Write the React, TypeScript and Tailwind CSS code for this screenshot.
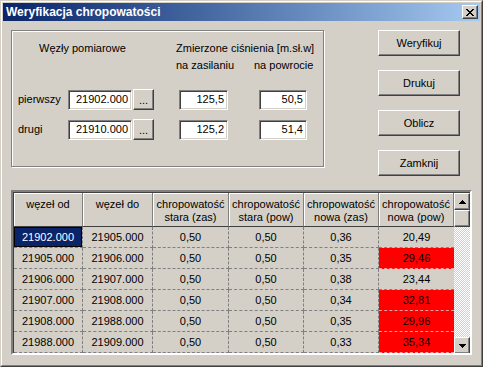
import React from "react";

type Row = {
  from: string;
  to: string;
  oldZas: string;
  oldPow: string;
  newZas: string;
  newPow: string;
  alert: boolean;
};

const rows: Row[] = [
  { from: "21902.000", to: "21905.000", oldZas: "0,50", oldPow: "0,50", newZas: "0,36", newPow: "20,49", alert: false },
  { from: "21905.000", to: "21906.000", oldZas: "0,50", oldPow: "0,50", newZas: "0,35", newPow: "29,46", alert: true },
  { from: "21906.000", to: "21907.000", oldZas: "0,50", oldPow: "0,50", newZas: "0,38", newPow: "23,44", alert: false },
  { from: "21907.000", to: "21908.000", oldZas: "0,50", oldPow: "0,50", newZas: "0,34", newPow: "32,81", alert: true },
  { from: "21908.000", to: "21988.000", oldZas: "0,50", oldPow: "0,50", newZas: "0,35", newPow: "29,96", alert: true },
  { from: "21988.000", to: "21909.000", oldZas: "0,50", oldPow: "0,50", newZas: "0,33", newPow: "35,34", alert: true },
];

const raised =
  "border border-white border-r-[#404040] border-b-[#404040] shadow-[inset_-1px_-1px_0_#808080] bg-[#d4d0c8]";
const sunken =
  "border border-[#808080] border-r-white border-b-white shadow-[inset_1px_1px_0_#404040,inset_-1px_-1px_0_#d4d0c8] bg-white";

function CloseGlyph() {
  const cells = [
    [0, 0], [1, 0], [6, 0], [7, 0],
    [1, 1], [2, 1], [5, 1], [6, 1],
    [2, 2], [3, 2], [4, 2], [5, 2],
    [3, 3], [4, 3],
    [2, 4], [3, 4], [4, 4], [5, 4],
    [1, 5], [2, 5], [5, 5], [6, 5],
    [0, 6], [1, 6], [6, 6], [7, 6],
  ];
  return (
    <svg width="8" height="7" viewBox="0 0 8 7" shapeRendering="crispEdges">
      {cells.map(([x, y]) => (
        <rect key={`${x}-${y}`} x={x} y={y} width="1" height="1" fill="#000" />
      ))}
    </svg>
  );
}

function Arrow({ up }: { up?: boolean }) {
  return (
    <svg width="7" height="4" viewBox="0 0 7 4" shapeRendering="crispEdges">
      <path d={up ? "M3 0h1v1h1v1h1v1h1v1H0V3h1V2h1V1h1z" : "M0 0h7v1H6v1H5v1H4v1H3V3H2V2H1V1H0z"} fill="#000" />
    </svg>
  );
}

function Field({ value, width }: { value: string; width: string }) {
  return (
    <div className={`${sunken} ${width} h-[20px] flex items-center justify-end pr-[3px] text-black`}>
      {value}
    </div>
  );
}

function NodeRow({ label, node, zas, pow }: { label: string; node: string; zas: string; pow: string }) {
  return (
    <div className="flex items-center h-[21px]">
      <span className="w-[56px] pl-[6px] text-black">{label}</span>
      <Field value={node} width="w-[64px]" />
      <button className={`${raised} ml-[1px] w-[21px] h-[21px] flex items-end justify-center pb-[3px] leading-none text-black`}>
        ...
      </button>
      <div className="ml-[25px]">
        <Field value={zas} width="w-[49px]" />
      </div>
      <div className="ml-[31px]">
        <Field value={pow} width="w-[48px]" />
      </div>
    </div>
  );
}

function ActionButton({ label }: { label: string }) {
  return (
    <button className={`${raised} w-[82px] h-[26px] text-black font-normal`}>{label}</button>
  );
}

const cols = "grid grid-cols-[69px_70px_76px_75px_75px_75px]";

function HeaderCell({ top, bottom }: { top: string; bottom?: string }) {
  return (
    <div className="h-[34px] border-r border-b border-r-[#808080] border-b-[#404040] shadow-[inset_1px_1px_0_#fff] pt-[5px] text-center leading-[13px] text-black">
      <div>{top}</div>
      {bottom && <div>{bottom}</div>}
    </div>
  );
}

function Cell({ children, cls }: { children: React.ReactNode; cls?: string }) {
  return (
    <div
      className={`h-[21px] flex items-center justify-center border-b border-dashed ${cls ?? "border-r border-[#808080] text-black"}`}
    >
      {children}
    </div>
  );
}

function Grid() {
  return (
    <div className="border-2 border-t-[#808080] border-l-[#808080] border-r-white border-b-white shadow-[inset_1px_1px_0_#404040] w-[461px] h-[165px] overflow-hidden">
      <div className="flex pl-[1px] pt-[1px]">
        <div className="w-[440px]">
          <div className={cols}>
            <HeaderCell top="węzeł od" />
            <HeaderCell top="węzeł do" />
            <HeaderCell top="chropowatość" bottom="stara (zas)" />
            <HeaderCell top="chropowatość" bottom="stara (pow)" />
            <HeaderCell top="chropowatość" bottom="nowa (zas)" />
            <HeaderCell top="chropowatość" bottom="nowa (pow)" />
          </div>
          {rows.map((r, i) => (
            <div key={r.from} className={cols}>
              {i === 0 ? (
                <div className="h-[21px] border-b border-r border-dashed border-[#808080]">
                  <div className="h-[20px] bg-[#0a246a] border border-black flex items-center justify-center text-white">
                    {r.from}
                  </div>
                </div>
              ) : (
                <Cell>{r.from}</Cell>
              )}
              <Cell>{r.to}</Cell>
              <Cell>{r.oldZas}</Cell>
              <Cell>{r.oldPow}</Cell>
              <Cell>{r.newZas}</Cell>
              <Cell cls={r.alert ? "bg-[#ff0000] border-[#f0a0a0] text-black" : "border-[#808080] text-black"}>
                {r.newPow}
              </Cell>
            </div>
          ))}
        </div>
        <div className="w-[17px] h-[161px] flex flex-col">
          <div className={`${raised} h-[17px] flex items-center justify-center`}>
            <Arrow up />
          </div>
          <div className={`${raised} h-[17px]`} />
          <div className="flex-1 bg-[image:repeating-conic-gradient(#ffffff_0_25%,#d4d0c8_0_50%)] bg-[length:2px_2px]" />
          <div className={`${raised} h-[17px] flex items-center justify-center`}>
            <Arrow />
          </div>
        </div>
      </div>
    </div>
  );
}

export default function App() {
  return (
    <div className="w-[483px] h-[367px] border border-[#d4d0c8] border-r-[#404040] border-b-[#404040] bg-[#d4d0c8] font-['Liberation_Sans',Arial,sans-serif] text-[11px]">
      <div className="h-full border border-white border-r-[#808080] border-b-[#808080] p-[1px]">
        <div className="h-[18px] flex items-center justify-between bg-linear-to-r from-[#0a246a] to-[#a6caf0] pl-[3px] pr-[2px]">
          <span className="text-white font-bold text-[12px] leading-none">Weryfikacja chropowatości</span>
          <div className={`${raised} w-[16px] h-[14px] flex items-center justify-center`}>
            <CloseGlyph />
          </div>
        </div>

        <div className="pl-[8px] pt-[9px]">
          <div className="flex items-start">
            <div className="w-[313px] h-[137px] border border-[#808080] shadow-[inset_1px_1px_0_#fff,1px_1px_0_#fff] pt-[11px] leading-[13px]">
              <div className="flex text-black">
                <span className="ml-[27px] w-[137px]">Węzły pomiarowe</span>
                <div>
                  <div>Zmierzone ciśnienia [m.sł.w]</div>
                  <div className="flex mt-[4px]">
                    <span className="w-[78px]">na zasilaniu</span>
                    <span>na powrocie</span>
                  </div>
                </div>
              </div>
              <div className="mt-[17px] flex flex-col gap-[9px]">
                <NodeRow label="pierwszy" node="21902.000" zas="125,5" pow="50,5" />
                <NodeRow label="drugi" node="21910.000" zas="125,2" pow="51,4" />
              </div>
            </div>
            <div className="ml-[54px] flex flex-col gap-[14px]">
              <ActionButton label="Weryfikuj" />
              <ActionButton label="Drukuj" />
              <ActionButton label="Oblicz" />
              <ActionButton label="Zamknij" />
            </div>
          </div>
          <div className="mt-[14px]">
            <Grid />
          </div>
        </div>
      </div>
    </div>
  );
}
